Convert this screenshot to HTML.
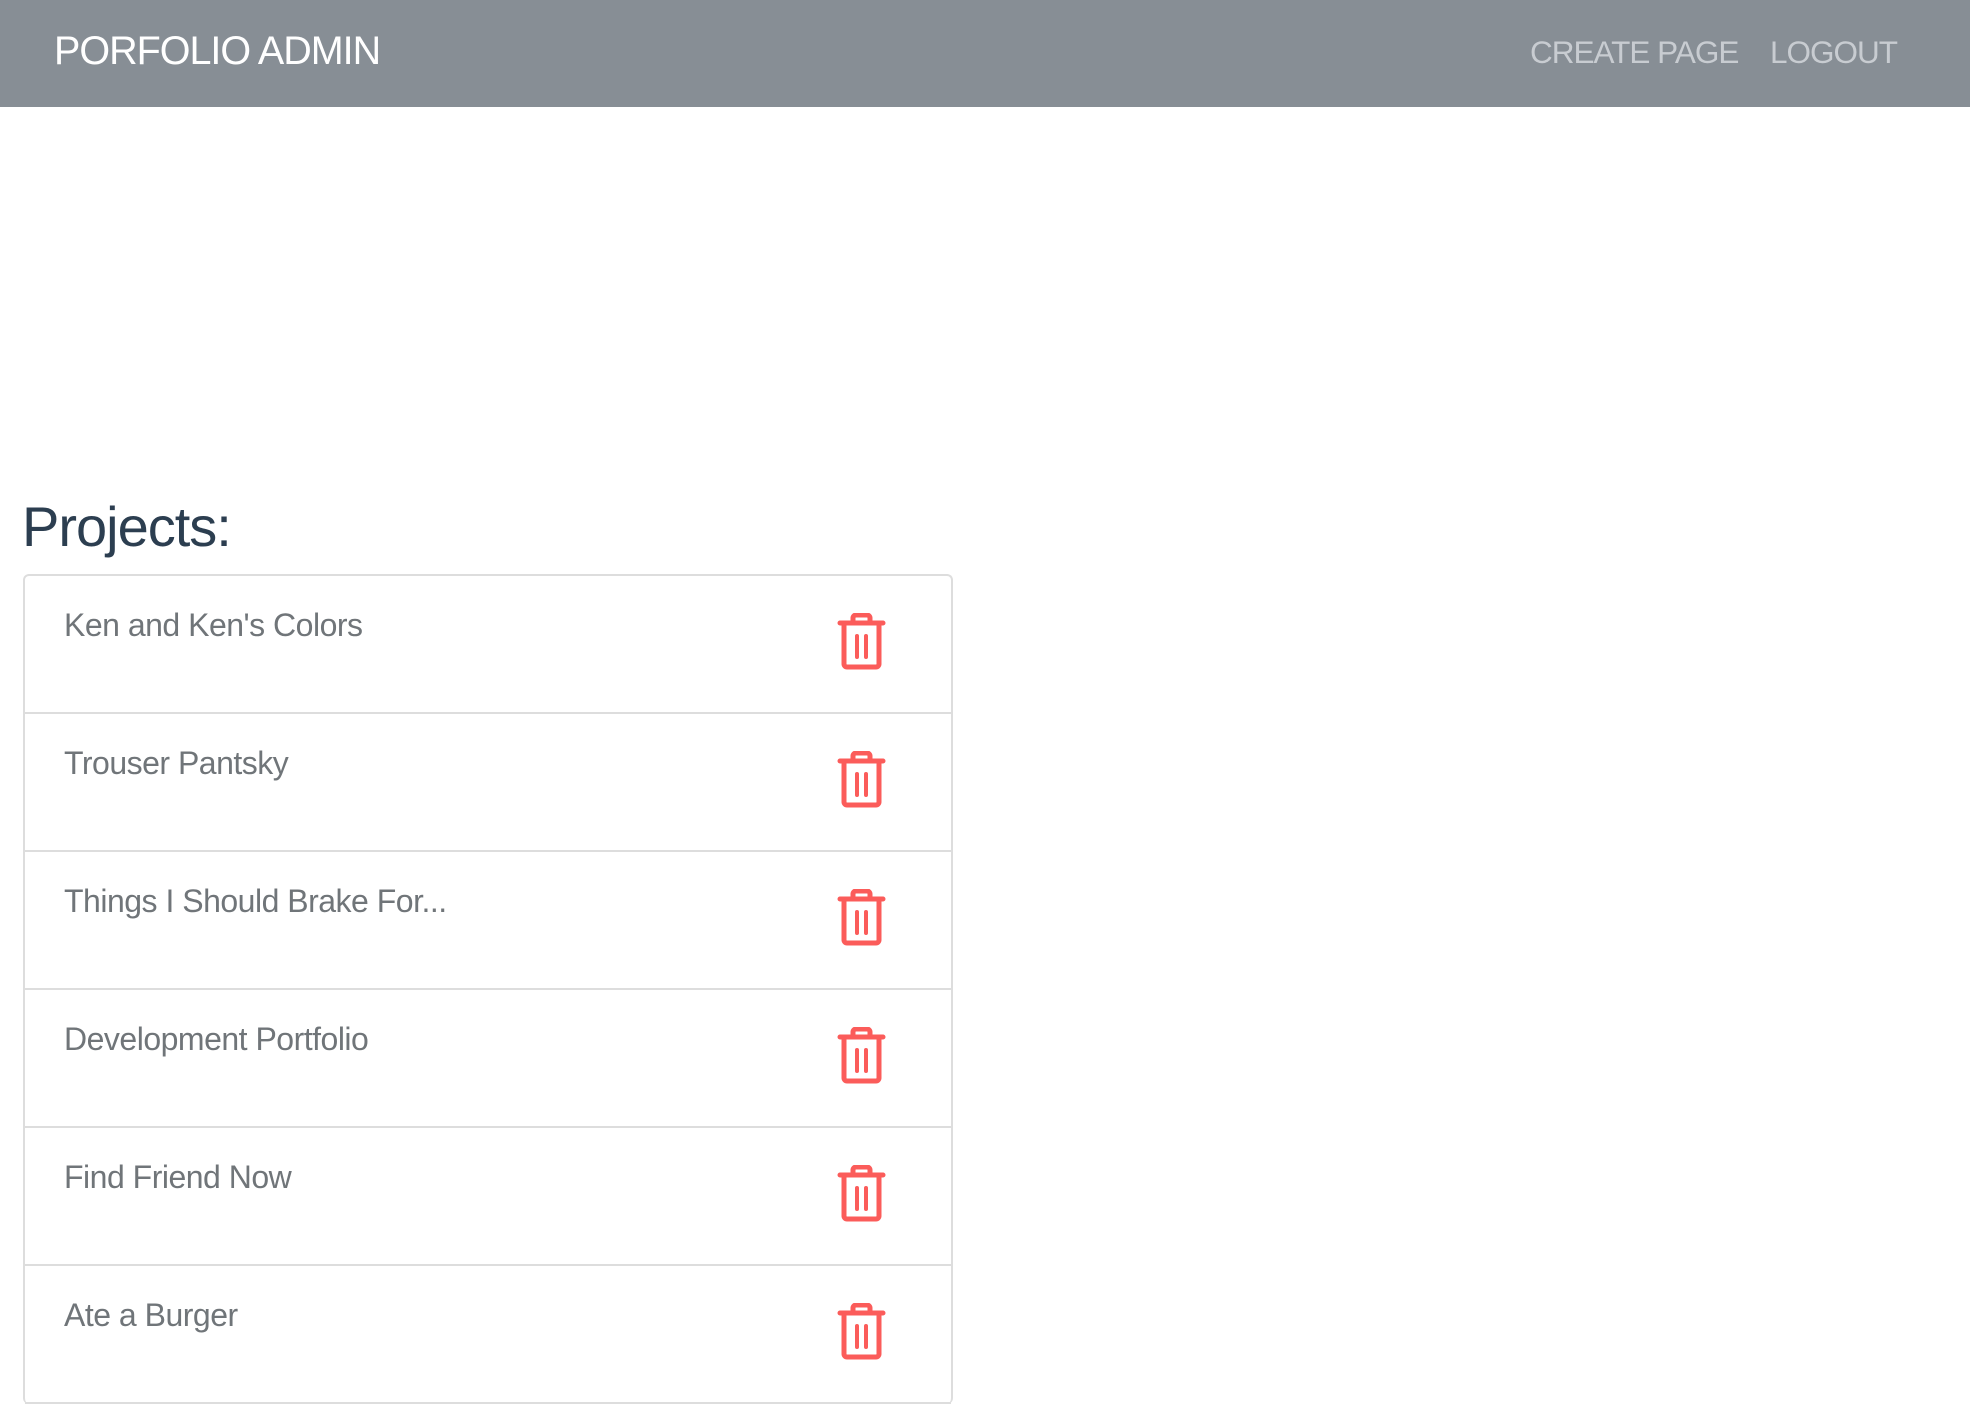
<!DOCTYPE html>
<html><head><meta charset="utf-8"><style>
*{margin:0;padding:0;box-sizing:border-box}
body{width:1970px;height:1373px;overflow:hidden;background:#fff;font-family:"Liberation Sans",Arial,sans-serif}
.nav{height:107px;background:#878e95;position:relative}
.brand{position:absolute;left:54px;top:29px;font-size:39.5px;color:#fff;letter-spacing:-1px}
.links{position:absolute;top:34px;font-size:31.5px;color:#c8ccd1;letter-spacing:-1px}
h1{position:absolute;left:22px;top:494px;font-size:56px;font-weight:normal;color:#2c3e50;letter-spacing:-1px}
.list{position:absolute;left:23px;top:574px;width:930px;border:2px solid #ddd;border-radius:6px;border-bottom:none}
.row{height:138px;border-bottom:2px solid #ddd;position:relative}
.row span{position:absolute;left:39px;top:28px;font-size:32px;line-height:42px;color:#707579;letter-spacing:-0.5px}
.row svg{position:absolute;left:812px;top:37px}
</style></head><body>
<div class="nav"><div class="brand">PORFOLIO ADMIN</div>
<div class="links" style="left:1530px">CREATE PAGE</div>
<div class="links" style="left:1770px">LOGOUT</div></div>
<h1>Projects:</h1>
<div class="list">
<div class="row"><span>Ken and Ken's Colors</span><svg width="49" height="57" viewBox="0 0 49 57"><g fill="none" stroke="#fb5c5a" stroke-width="5" stroke-linecap="round" stroke-linejoin="round"><path d="M16 9V5a3 3 0 0 1 3-3h11a3 3 0 0 1 3 3v4"/><path d="M3 10h43"/><path d="M7 11v40a3 3 0 0 0 3 3h29a3 3 0 0 0 3-3V11"/><path d="M20 23v21M29 23v21" stroke-width="4"/></g></svg></div>
<div class="row"><span>Trouser Pantsky</span><svg width="49" height="57" viewBox="0 0 49 57"><g fill="none" stroke="#fb5c5a" stroke-width="5" stroke-linecap="round" stroke-linejoin="round"><path d="M16 9V5a3 3 0 0 1 3-3h11a3 3 0 0 1 3 3v4"/><path d="M3 10h43"/><path d="M7 11v40a3 3 0 0 0 3 3h29a3 3 0 0 0 3-3V11"/><path d="M20 23v21M29 23v21" stroke-width="4"/></g></svg></div>
<div class="row"><span>Things I Should Brake For...</span><svg width="49" height="57" viewBox="0 0 49 57"><g fill="none" stroke="#fb5c5a" stroke-width="5" stroke-linecap="round" stroke-linejoin="round"><path d="M16 9V5a3 3 0 0 1 3-3h11a3 3 0 0 1 3 3v4"/><path d="M3 10h43"/><path d="M7 11v40a3 3 0 0 0 3 3h29a3 3 0 0 0 3-3V11"/><path d="M20 23v21M29 23v21" stroke-width="4"/></g></svg></div>
<div class="row"><span>Development Portfolio</span><svg width="49" height="57" viewBox="0 0 49 57"><g fill="none" stroke="#fb5c5a" stroke-width="5" stroke-linecap="round" stroke-linejoin="round"><path d="M16 9V5a3 3 0 0 1 3-3h11a3 3 0 0 1 3 3v4"/><path d="M3 10h43"/><path d="M7 11v40a3 3 0 0 0 3 3h29a3 3 0 0 0 3-3V11"/><path d="M20 23v21M29 23v21" stroke-width="4"/></g></svg></div>
<div class="row"><span>Find Friend Now</span><svg width="49" height="57" viewBox="0 0 49 57"><g fill="none" stroke="#fb5c5a" stroke-width="5" stroke-linecap="round" stroke-linejoin="round"><path d="M16 9V5a3 3 0 0 1 3-3h11a3 3 0 0 1 3 3v4"/><path d="M3 10h43"/><path d="M7 11v40a3 3 0 0 0 3 3h29a3 3 0 0 0 3-3V11"/><path d="M20 23v21M29 23v21" stroke-width="4"/></g></svg></div>
<div class="row"><span>Ate a Burger</span><svg width="49" height="57" viewBox="0 0 49 57"><g fill="none" stroke="#fb5c5a" stroke-width="5" stroke-linecap="round" stroke-linejoin="round"><path d="M16 9V5a3 3 0 0 1 3-3h11a3 3 0 0 1 3 3v4"/><path d="M3 10h43"/><path d="M7 11v40a3 3 0 0 0 3 3h29a3 3 0 0 0 3-3V11"/><path d="M20 23v21M29 23v21" stroke-width="4"/></g></svg></div>
</div>
</body></html>
